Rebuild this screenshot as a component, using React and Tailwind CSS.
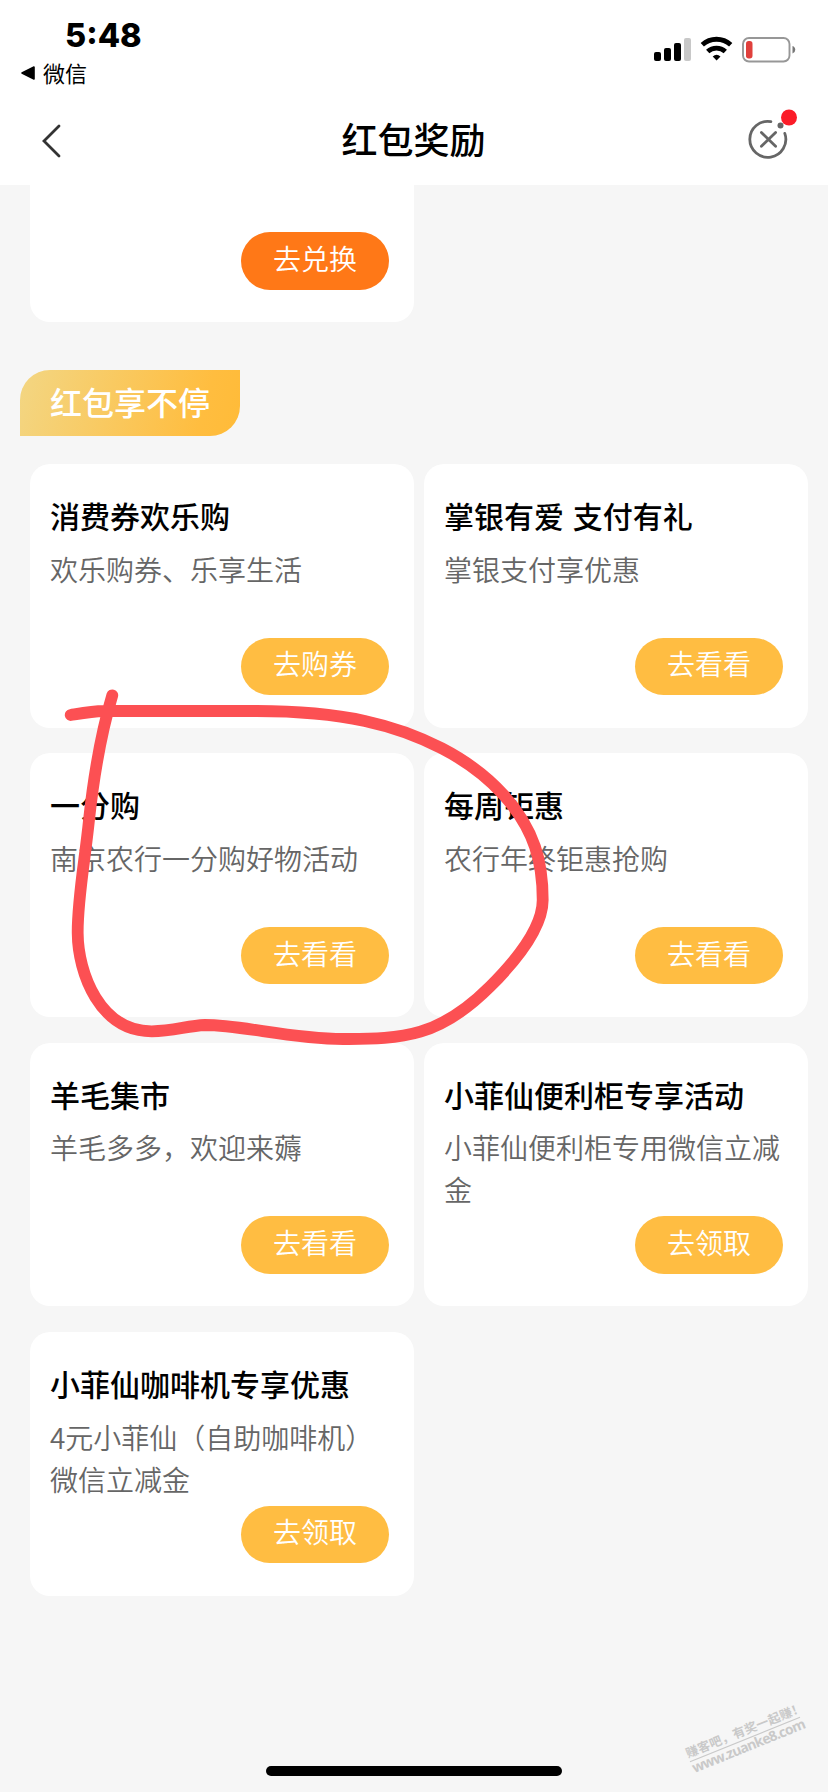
import React from "react";

const offers = [
  { title: "消费券欢乐购", desc: "欢乐购券、乐享生活", action: "去购券" },
  { title: "掌银有爱 支付有礼", desc: "掌银支付享优惠", action: "去看看" },
  { title: "一分购", desc: "南京农行一分购好物活动", action: "去看看" },
  { title: "每周钜惠", desc: "农行年终钜惠抢购", action: "去看看" },
  { title: "羊毛集市", desc: "羊毛多多，欢迎来薅", action: "去看看" },
  { title: "小菲仙便利柜专享活动", desc: "小菲仙便利柜专用微信立减金", action: "去领取" },
  { title: "小菲仙咖啡机专享优惠", desc: "4元小菲仙（自助咖啡机）微信立减金", action: "去领取" },
];

function Pill({ children, className }) {
  return (
    <button
      className={`flex h-[57.5px] w-[148px] shrink-0 items-center justify-center rounded-full pb-1.5 text-[28px] leading-none font-[350] text-white ${className}`}
    >
      {children}
    </button>
  );
}

function OfferCard({ title, desc, action }) {
  return (
    <article className="flex h-[263.5px] flex-col rounded-[20px] bg-white pt-[29px] pr-[25px] pb-[32.5px] pl-5">
      <h3 className="text-[30px] leading-[44px] font-medium whitespace-nowrap text-black [word-spacing:2px]">{title}</h3>
      <p className="mt-[10.500px] -mr-2 text-[28px] leading-[42px] font-[350] text-[#666]">{desc}</p>
      <div className="mt-auto flex justify-end">
        <Pill className="bg-[#ffbd42]">{action}</Pill>
      </div>
    </article>
  );
}

function StatusBar() {
  return (
    <div className="flex h-[98px] justify-between pl-[21px]">
      <div className="flex flex-col pt-[20px]">
        <span className="ml-[44px] font-['Inter'] text-[32.5px] leading-[32px] font-extrabold">5:48</span>
        <span className="mt-[6px] flex items-center gap-[8px] text-[22px] leading-[28px]">
          <svg className="mt-[2px]" width="14" height="14" viewBox="0 0 14 14">
            <path d="M1 7 13 1v12z" stroke="#000" strokeWidth="1.6" strokeLinejoin="round" />
          </svg>
          微信
        </span>
      </div>
      <svg className="mt-[34px] mr-[31px]" width="144" height="32" viewBox="0 0 144 32">
        <rect x="1" y="18" width="7" height="9" rx="2" />
        <rect x="11" y="14" width="7" height="13" rx="2" />
        <rect x="21" y="9" width="7" height="18" rx="2" />
        <rect x="31" y="4" width="7" height="23" rx="2" fill="#c8c8c8" />
        <g fill="none" stroke="#000" strokeWidth="4.8">
          <path d="M49.300 10.800a21 21 0 0 1 28.400 0" />
          <path d="M54.700 17.600a13 13 0 0 1 17.600 0" />
        </g>
        <path d="M59.700 22.400a6 6 0 0 1 7.800 0l-3.900 4.200z" />
        <rect x="90" y="4" width="46.500" height="23.500" rx="6" fill="none" stroke="#979797" strokeWidth="1.900" />
        <rect x="93" y="7" width="6.500" height="17.500" rx="2.700" fill="#e0403c" />
        <path d="M139.500 12a4 4 0 0 1 0 7.600z" fill="#777" />
      </svg>
    </div>
  );
}

function NavBar() {
  return (
    <div className="flex h-[87px] items-center justify-between pr-[31px] pl-[40px]">
      <svg className="-mt-0.5" width="60" height="40" viewBox="0 0 60 40" fill="none">
        <path d="M19 5 4 20 19 35" stroke="#333" strokeWidth="2.800" strokeLinecap="round" />
      </svg>
      <h1 className="-mt-[7px] -ml-[10px] text-[36px] leading-[48px] font-medium text-black">红包奖励</h1>
      <svg className="-mt-4" width="60" height="60" viewBox="0 0 60 60" fill="none">
        <g stroke="#666" strokeWidth="2.800" strokeLinecap="round">
          <path d="M33.900 17.600A18 18 0 1 0 47.800 29.400" />
          <path d="M24.400 28.500 38.600 42.300M38.600 28.500 24.400 42.300" />
        </g>
        <circle cx="43.500" cy="21.500" r="3" fill="#666" />
        <circle cx="52" cy="13.500" r="8" fill="#fb1c28" />
      </svg>
    </div>
  );
}

export default function App() {
  return (
    <div className="relative flex h-[1792px] w-[828px] flex-col overflow-hidden bg-[#f6f6f6] font-['Noto_Sans_CJK_SC',sans-serif]">
      <header className="bg-white">
        <StatusBar />
        <NavBar />
      </header>

      <main className="flex flex-col pr-5 pl-[30px]">
        <div className="flex h-[137px] w-[384px] items-end justify-end rounded-b-[20px] bg-white pr-[25px] pb-[32.5px]">
          <Pill className="bg-[#ff7817]">去兑换</Pill>
        </div>
        <h2 className="mt-[48px] -ml-[10px] flex h-[66px] w-[220px] items-center rounded-tl-[30px] rounded-br-[30px] bg-linear-[105deg,#f3d683,#ffbd3f_82%,#ffbb38] pb-[4px] pl-[30px] text-[32px] leading-none font-medium text-white">
          红包享不停
        </h2>
        <div className="mt-[28px] grid grid-cols-[384px_384px] gap-x-[10px] gap-y-[25.9px]">
          {offers.map((o) => (
            <OfferCard key={o.title} {...o} />
          ))}
        </div>
      </main>

      <svg className="pointer-events-none absolute inset-0" width="828" height="1792" viewBox="0 0 828 1792" fill="none">
        <path
          d="M70.700 715C81 713.300 92 711.200 104 711H256.700C343 711 397 725 441.700 748.300C493.300 775 523 812 535 846.700C540 861.300 542.700 883.300 542.700 900C542.700 930 512 964.700 490 986.700C440 1036.700 403.300 1039.300 343.300 1039C290 1039 243.300 1025 205 1025C186.700 1026 173.300 1031 151.700 1031.300C100 1031.300 78 973.300 77.700 933.300C77.300 900 85 860 89 820C93.300 780 100 736.700 112.300 695.300"
          stroke="#fc5053"
          strokeWidth="11.800"
          strokeLinecap="round"
          strokeLinejoin="round"
        />
        <g fill="#c9c9c9" className="font-bold">
          <text x="688" y="1758" fontSize="12.400" textLength="126" transform="rotate(-22 688 1758)">赚客吧，有奖一起赚！</text>
          <path d="M690 1761.700 800 1717.300" stroke="#c9c9c9" strokeWidth="1.200" />
          <text x="694.500" y="1773" fontSize="14" textLength="121" transform="rotate(-22 694.500 1773)" className="font-['Open_Sans']">www.zuanke8.com</text>
        </g>
      </svg>

      <div className="absolute bottom-[16px] left-[266px] h-[10px] w-[296px] rounded-full bg-black" />
    </div>
  );
}
